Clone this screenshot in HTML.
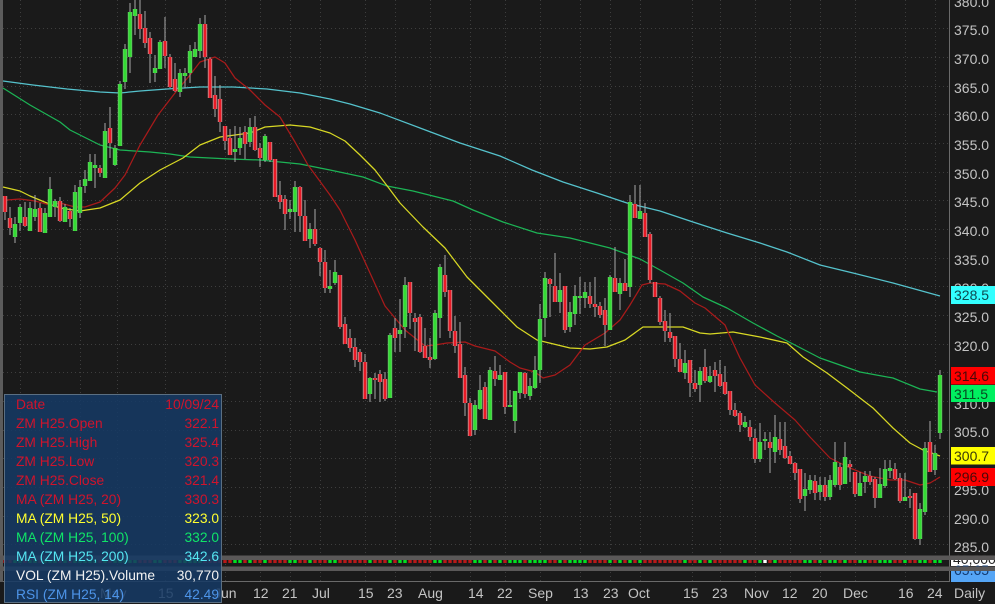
<!DOCTYPE html>
<html>
<head>
<meta charset="utf-8">
<title>ZM H25 Daily</title>
<style>
html,body{margin:0;padding:0;width:995px;height:603px;overflow:hidden;background:#1a1a1a}
svg{position:absolute;left:0;top:0;display:block}
svg text{font-family:"Liberation Sans",Arial,sans-serif;font-size:14px}
#panel{position:absolute;left:4px;top:394px;width:216px;height:207px;background:rgba(22,58,100,.87);border:1px solid #5b6f82;font-family:"Liberation Sans",Arial,sans-serif;font-size:13.8px;box-sizing:content-box}
#panel div{position:absolute;left:11px;right:2px;height:19px;line-height:19px;display:flex;justify-content:space-between;white-space:nowrap}
</style>
</head>
<body>
<svg width="995" height="603" viewBox="0 0 995 603" xmlns="http://www.w3.org/2000/svg">
<defs>
<path id="gb" fill="none" d="M15 224V237M20 207V223M30 208V231M35 209V217M45 213V233M50 189V217M55 201V207M65 207V222M75 192V231M80 187V213M85 179V186M90 162V181M95 165V168M105 131V178M115 148V165M120 84V146M125 49V82M130 12V57M135 9V16M155 68V73M160 42V69M180 73V92M185 73V76M190 51V73M195 49V57M200 24V51M235 149V152M240 138V148M250 127V142M265 136V160M290 209V212M295 187V212M310 229V239M330 286V289M335 272V283M370 378V394M390 335V398M400 330V334M405 285V327M435 313V359M440 267V318M475 405V430M480 390V409M490 370V420M500 375V380M510 405V407M515 391V421M520 372V393M530 386V396M535 370V388M540 319V370M545 278V318M560 290V302M570 312V327M575 296V314M580 296V298M585 292V298M610 277V330M620 283V294M630 202V287M640 211V219M685 363V373M700 371V385M710 376V382M745 422V427M760 442V459M765 439V441M775 437V452M805 489V496M810 480V490M820 485V492M830 480V497M835 462V485M845 457V484M860 483V496M865 476V482M880 484V498M885 469V486M890 468V471M905 497V501M920 509V539M925 448V512M935 453V470M940 375V433"/>
<path id="rb" fill="none" d="M5 196V212M10 218V228M25 217V226M40 208V232M60 201V221M70 211V219M100 168V173M110 128V143M140 14V29M145 28V43M150 38V54M165 41V56M170 57V87M175 79V91M205 24V57M210 59V98M215 95V109M220 99V122M225 126V141M230 138V155M245 132V144M255 127V150M260 148V158M270 142V160M275 159V197M280 195V202M285 199V214M300 187V216M305 216V241M315 229V244M320 248V262M325 262V288M340 275V327M345 324V344M350 338V348M355 347V360M360 352V362M365 362V399M375 378V380M380 374V382M385 379V399M395 328V338M410 282V313M415 318V322M420 317V352M425 346V358M430 357V360M445 275V292M450 290V331M455 331V346M460 344V378M465 375V403M470 403V436M485 387V419M495 371V379M505 372V407M525 373V394M550 279V284M555 286V302M565 286V330M590 296V304M595 304V307M600 306V315M605 310V325M615 278V292M625 283V291M635 204V218M645 213V237M650 234V280M655 282V297M660 298V322M665 321V331M670 332V338M675 336V359M680 359V372M690 360V383M695 383V389M705 367V381M715 370V376M720 374V386M725 382V394M730 391V410M735 410V416M740 413V425M750 427V437M755 438V459M770 442V448M780 439V450M785 446V458M790 456V464M795 463V473M800 469V499M815 481V493M825 485V497M840 467V485M850 464V467M855 472V494M870 476V482M875 479V498M895 469V479M900 478V501M910 496V498M915 493V539M930 442V472"/>
</defs>
<rect width="995" height="603" fill="#1a1a1a"/>
<rect x="0" y="0" width="3" height="582" fill="#5c5c5c"/>
<!-- grid -->
<path fill="none" stroke="#3e3e3e" stroke-width="1" stroke-dasharray="1 3" shape-rendering="crispEdges" d="M3 28.5H949M3 57.5H949M3 86.5H949M3 114.5H949M3 143.5H949M3 172.5H949M3 200.5H949M3 229.5H949M3 258.5H949M3 286.5H949M3 315.5H949M3 344.5H949M3 372.5H949M3 401.5H949M3 430.5H949M3 458.5H949M3 487.5H949M3 516.5H949M3 544.5H949"/>
<path fill="none" stroke="#3e3e3e" stroke-width="1" stroke-dasharray="1 3" shape-rendering="crispEdges" d="M20.5 0V582M80.5 0V582M117.5 0V582M165.5 0V582M225.5 0V582M260.5 0V582M290.5 0V582M320.5 0V582M365.5 0V582M395.5 0V582M430.5 0V582M470.5 0V582M505.5 0V582M540.5 0V582M580.5 0V582M610.5 0V582M640.5 0V582M692.5 0V582M720.5 0V582M755.5 0V582M790.5 0V582M820.5 0V582M855.5 0V582M905.5 0V582M935.5 0V582"/>
<!-- moving averages -->
<g fill="none" stroke-width="1.25" stroke-linejoin="round">
<polyline stroke="#55c2cc" points="3,81 33,85 67,89 100,92 120,93 140,91 167,89 200,87 233,87 267,89 300,93 330,99 350,104 380,113 420,128 460,143 500,156 532,170 563,182 597,193 627,203 660,211 693,222 727,233 760,243 787,252 820,265 853,273 893,283 940,296"/>
<polyline stroke="#1cb455" points="3,88 30,105 60,122 70,130 100,145 120,150 150,152 170,154 190,157 230,159 260,160 280,162 300,164 330,170 363,177 387,186 413,191 453,201 473,210 503,222 537,233 570,238 610,248 640,259 660,270 683,283 703,297 727,308 753,323 777,336 793,344 820,358 860,372 893,378 920,389 937,392"/>
<polyline stroke="#d8d824" points="3,187 20,191 30,196 47,203 60,208 80,211 100,208 120,200 140,183 160,170 183,158 200,145 220,137 250,133 265,127 290,125 310,127 330,133 345,141 360,155 375,170 388,187 400,203 423,227 445,248 467,277 493,303 517,327 537,340 570,348 590,349 607,347 625,340 643,327 660,327 683,327 700,333 710,334 733,332 760,337 787,343 803,357 827,373 847,388 873,408 893,428 910,443 923,450 940,456"/>
<polyline stroke="#a81a1a" points="7,200 20,199 35,201 50,205 60,203 75,207 85,207 100,202 115,188 125,175 140,145 158,115 175,93 190,75 200,62 215,57 225,63 235,78 250,90 265,105 280,117 295,142 308,165 330,195 340,210 355,240 365,262 385,306 405,330 425,346 435,345 447,343 465,342 475,346 495,351 510,362 520,368 535,372 543,378 555,375 570,365 585,345 605,333 620,320 630,305 642,285 650,283 665,284 680,291 695,303 705,308 725,325 728,332 740,358 755,385 775,403 795,420 810,437 830,458 850,468 870,476 890,480 905,480 920,485 930,483 940,477"/>
</g>
<!-- wicks -->
<path fill="none" stroke="#a8a8a8" stroke-width="1" d="M5 196V220M10 207V235M15 217V243M20 204V231M25 202V227M30 202V231M35 195V221M40 203V232M45 208V233M50 177V217M55 199V217M60 197V222M65 204V222M70 208V227M75 185V231M80 180V218M85 170V193M90 154V181M95 154V188M100 165V177M105 123V178M110 107V158M115 145V166M120 81V146M125 44V89M130 3V73M135 0V35M140 0V39M145 11V48M150 32V83M155 55V82M160 40V69M165 17V68M170 54V88M175 63V92M180 69V97M185 68V88M190 45V83M195 42V57M200 18V58M205 15V68M210 57V98M215 76V117M220 85V132M225 126V150M230 129V155M235 126V162M240 127V155M245 126V159M250 118V147M255 116V151M260 143V167M265 134V162M270 142V162M275 159V197M280 181V209M285 195V230M290 200V219M295 181V232M300 186V232M305 200V241M310 223V248M315 209V246M320 247V276M325 250V293M330 270V293M335 260V285M340 275V329M345 317V344M350 329V352M355 338V367M360 349V371M365 354V399M370 377V402M375 373V399M380 370V402M385 372V401M390 333V398M395 318V352M400 299V352M405 277V338M410 282V329M415 313V351M420 314V353M425 328V358M430 338V368M435 310V360M440 264V338M445 255V297M450 290V338M455 316V353M460 322V378M465 367V416M470 398V436M475 400V435M480 375V410M485 382V419M490 367V420M495 356V386M500 365V380M505 372V414M510 390V407M515 391V433M520 372V399M525 372V398M530 378V400M535 356V389M540 304V383M545 272V337M550 278V317M555 253V302M560 273V313M565 286V333M570 302V332M575 285V325M580 277V314M585 282V308M590 282V308M595 277V317M600 302V318M605 298V346M610 275V330M615 247V292M620 278V310M625 259V291M630 195V297M635 185V218M640 185V219M645 203V237M650 232V283M655 282V297M660 296V325M665 310V342M670 313V342M675 336V367M680 343V372M685 350V379M690 360V397M695 370V392M700 367V402M705 349V383M710 366V383M715 362V392M720 360V387M725 366V395M730 391V415M735 403V417M740 411V432M745 416V428M750 420V441M755 429V463M760 423V462M765 432V450M770 432V473M775 415V463M780 422V455M785 422V459M790 451V464M795 462V480M800 469V503M805 473V511M810 475V494M815 475V500M820 477V500M825 477V501M830 475V500M835 442V487M840 463V490M845 442V484M850 460V482M855 472V497M860 472V496M865 471V493M870 471V485M875 477V508M880 468V498M885 460V488M890 460V478M895 463V480M900 473V503M905 473V501M910 489V508M915 493V540M920 503V545M925 442V515M930 421V472M935 445V475M940 370V439"/>
<!-- green bodies -->
<use href="#gb" stroke="#6cc46c" stroke-width="4.4"/>
<use href="#gb" stroke="#33dd33" stroke-width="2.8"/>
<!-- red bodies -->
<use href="#rb" stroke="#c49090" stroke-width="4.4"/>
<use href="#rb" stroke="#ea1a26" stroke-width="2.6"/>
<!-- right axis -->
<path d="M949.5 0V582" stroke="#6a6a6a" stroke-width="1"/>
<g fill="#c4c4c4">
<text x="954" y="7">380.0</text><text x="954" y="35">375.0</text><text x="954" y="64">370.0</text><text x="954" y="93">365.0</text><text x="954" y="121">360.0</text><text x="954" y="150">355.0</text><text x="954" y="179">350.0</text><text x="954" y="207">345.0</text><text x="954" y="236">340.0</text><text x="954" y="265">335.0</text><text x="954" y="293">330.0</text><text x="954" y="322">325.0</text><text x="954" y="351">320.0</text><text x="954" y="409">310.0</text><text x="954" y="437">305.0</text><text x="954" y="495">295.0</text><text x="954" y="524">290.0</text><text x="954" y="552">285.0</text>
</g>
<rect x="951" y="286" width="44" height="18" fill="#33ffff"/><text x="954" y="300" fill="#0d4a50">328.5</text>
<rect x="951" y="367" width="44" height="17.5" fill="#ff0000"/><text x="954" y="381" fill="#4a0808">314.6</text>
<rect x="951" y="385" width="44" height="17" fill="#00f060"/><text x="954" y="399" fill="#064a20">311.5</text>
<rect x="951" y="447" width="44" height="17.5" fill="#ffff00"/><text x="954" y="461" fill="#3a3a08">300.7</text>
<rect x="951" y="468" width="44" height="18" fill="#ff0000"/><text x="954" y="482" fill="#4a0808">296.9</text>
<!-- lower pane value boxes -->
<rect x="951" y="559" width="44" height="7" fill="#ffffff"/><text x="953" y="564" fill="#222">40,000</text>
<rect x="951" y="571" width="44" height="11" fill="#55a5f5"/><text x="954" y="575" fill="#123a70">65.65</text>
<!-- separator bands -->
<rect x="0" y="555.5" width="995" height="4.5" fill="#5a5858"/>
<rect x="0" y="566.5" width="995" height="4.5" fill="#5a5858"/>
<!-- trend dots -->
<path fill="none" stroke="#b81818" stroke-width="3.4" d="M5 560v3M10 560v3M25 560v3M40 560v3M60 560v3M70 560v3M100 560v3M110 560v3M140 560v3M145 560v3M150 560v3M165 560v3M170 560v3M175 560v3M205 560v3M210 560v3M215 560v3M220 560v3M225 560v3M230 560v3M245 560v3M255 560v3M260 560v3M270 560v3M275 560v3M280 560v3M285 560v3M300 560v3M305 560v3M315 560v3M320 560v3M325 560v3M340 560v3M345 560v3M350 560v3M355 560v3M360 560v3M365 560v3M375 560v3M380 560v3M385 560v3M395 560v3M410 560v3M415 560v3M420 560v3M425 560v3M430 560v3M445 560v3M450 560v3M455 560v3M460 560v3M465 560v3M470 560v3M485 560v3M495 560v3M505 560v3M525 560v3M550 560v3M555 560v3M565 560v3M590 560v3M595 560v3M600 560v3M605 560v3M615 560v3M625 560v3M635 560v3M645 560v3M650 560v3M655 560v3M660 560v3M665 560v3M670 560v3M675 560v3M680 560v3M690 560v3M695 560v3M705 560v3M715 560v3M720 560v3M725 560v3M730 560v3M735 560v3M740 560v3M750 560v3M755 560v3M770 560v3M780 560v3M785 560v3M790 560v3M795 560v3M800 560v3M815 560v3M825 560v3M840 560v3M850 560v3M855 560v3M870 560v3M875 560v3M895 560v3M900 560v3M910 560v3M915 560v3M930 560v3"/>
<path fill="none" stroke="#00e020" stroke-width="3.4" d="M15 560v3M20 560v3M30 560v3M35 560v3M45 560v3M50 560v3M55 560v3M65 560v3M75 560v3M80 560v3M85 560v3M90 560v3M95 560v3M105 560v3M115 560v3M120 560v3M125 560v3M130 560v3M135 560v3M155 560v3M160 560v3M180 560v3M185 560v3M190 560v3M195 560v3M200 560v3M235 560v3M240 560v3M250 560v3M265 560v3M290 560v3M295 560v3M310 560v3M330 560v3M335 560v3M370 560v3M390 560v3M400 560v3M405 560v3M435 560v3M440 560v3M475 560v3M480 560v3M490 560v3M500 560v3M510 560v3M515 560v3M520 560v3M530 560v3M535 560v3M540 560v3M545 560v3M560 560v3M570 560v3M575 560v3M580 560v3M585 560v3M610 560v3M620 560v3M630 560v3M640 560v3M685 560v3M700 560v3M710 560v3M745 560v3M760 560v3M775 560v3M805 560v3M810 560v3M820 560v3M830 560v3M835 560v3M845 560v3M860 560v3M865 560v3M880 560v3M885 560v3M890 560v3M905 560v3M920 560v3M925 560v3M935 560v3M940 560v3"/>
<path fill="none" stroke="#ffffff" stroke-width="3.4" d="M765 560v3"/>
<!-- x axis -->
<path d="M3 581.5H949.5" stroke="#6a6a6a" stroke-width="1"/>
<g fill="#c4c4c4">
<text x="100" y="598">May</text><text x="158" y="598">15</text><text x="214" y="598">Jun</text><text x="253" y="598">12</text><text x="282" y="598">21</text><text x="312" y="598">Jul</text><text x="358" y="598">15</text><text x="387" y="598">23</text><text x="418" y="598">Aug</text><text x="468" y="598">14</text><text x="497" y="598">22</text><text x="528" y="598">Sep</text><text x="573" y="598">13</text><text x="603" y="598">23</text><text x="628" y="598">Oct</text><text x="683" y="598">15</text><text x="712" y="598">23</text><text x="744" y="598">Nov</text><text x="782" y="598">12</text><text x="812" y="598">20</text><text x="843" y="598">Dec</text><text x="898" y="598">16</text><text x="927" y="598">24</text><text x="954" y="598">Daily</text>
</g>
</svg>
<div id="panel">
<div style="top:0;color:#d0142c"><span>Date</span><span>10/09/24</span></div>
<div style="top:19px;color:#d0142c"><span>ZM H25.Open</span><span>322.1</span></div>
<div style="top:38px;color:#d0142c"><span>ZM H25.High</span><span>325.4</span></div>
<div style="top:57px;color:#d0142c"><span>ZM H25.Low</span><span>320.3</span></div>
<div style="top:76px;color:#d0142c"><span>ZM H25.Close</span><span>321.4</span></div>
<div style="top:95px;color:#d0142c"><span>MA (ZM H25, 20)</span><span>330.3</span></div>
<div style="top:114px;color:#ffff30"><span>MA (ZM H25, 50)</span><span>323.0</span></div>
<div style="top:133px;color:#10e468"><span>MA (ZM H25, 100)</span><span>332.0</span></div>
<div style="top:152px;color:#55e6f2"><span>MA (ZM H25, 200)</span><span>342.6</span></div>
<div style="top:171px;color:#f2f2f2"><span>VOL (ZM H25).Volume</span><span>30,770</span></div>
<div style="top:190px;color:#4d94e8"><span>RSI (ZM H25, 14)</span><span>42.49</span></div>
</div>
</body>
</html>
